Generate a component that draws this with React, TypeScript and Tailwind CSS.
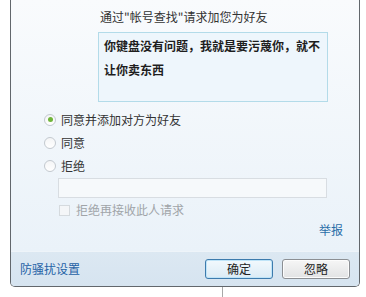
export default function App() {
  const font = { fontFamily: '"Noto Sans CJK SC", "Microsoft YaHei", sans-serif' };
  return (
    <div className="w-[366px] h-[297px] bg-white overflow-hidden text-[12px] text-[#2b2b2b]" style={font}>
      <div className="ml-[10px] w-[350px] h-[287px] border-x border-b border-[#62676c] rounded-b-[5px] overflow-hidden flex flex-col shadow-[inset_0_0_0_1px_#e9eef3]">
        <div className="h-[251px] bg-gradient-to-b from-[#f9fbfd] to-[#eaf2f9] flex flex-col">
          <div className="pt-[9px] pl-[89px] leading-[16px] text-[#333]">通过"帐号查找"请求加您为好友</div>
          <div className="mt-[7px] ml-[87px] w-[230px] h-[70px] border border-[#b3dbe9] bg-[#eef6fc] px-[5px] pt-[1px] font-bold leading-[24px] text-[#1e1e1e]">
            你键盘没有问题，我就是要污蔑你，就不让你卖东西
          </div>
          <div className="mt-[6px] flex flex-col">
            {[
              { label: "同意并添加对方为好友", on: true },
              { label: "同意", on: false },
              { label: "拒绝", on: false },
            ].map((r) => (
              <div key={r.label} className="h-[23px] flex items-center pl-[33px] gap-[5px]">
                <span className="w-[12px] h-[12px] rounded-full border border-[#c3c9cf] bg-gradient-to-b from-[#f4f5f6] to-white flex items-center justify-center">
                  {r.on && <span className="w-[5px] h-[5px] rounded-full bg-[#6fb53a]" />}
                </span>
                <span className="leading-[16px] text-[#333]">{r.label}</span>
              </div>
            ))}
          </div>
          <div className="mt-[1px] ml-[47px] w-[269px] h-[20px] border border-[#d8dde2] bg-[#f6f9fb]" />
          <div className="h-[24px] flex items-center pl-[48px] gap-[6px]">
            <span className="w-[11px] h-[11px] border border-[#d5dade] bg-[#f4f6f8]" />
            <span className="text-[#a0a4a8] leading-[16px]">拒绝再接收此人请求</span>
          </div>
          <div className="flex justify-end pr-[16px] leading-[16px] text-[#2a6ea8]">举报</div>
        </div>
        <div className="flex-1 border-t border-[#eef4f9] bg-gradient-to-b from-[#dce8f2] to-[#d6e4f0] flex items-center pl-[9px] pr-[9px]">
          <span className="text-[#1f62a6] leading-[16px]">防骚扰设置</span>
          <div className="ml-auto flex gap-[9px]">
            <button className="w-[68px] h-[20px] rounded-[3px] border border-[#3d7bad] bg-gradient-to-b from-[#f2f9fd] to-[#dbebf5] shadow-[inset_0_0_0_1px_#bfe4f8] text-[12px] leading-[16px] text-[#222]">确定</button>
            <button className="w-[68px] h-[20px] rounded-[3px] border border-[#8c8f93] bg-gradient-to-b from-[#f6f6f6] to-[#e2e3e4] shadow-[inset_0_0_0_1px_#fcfcfc] text-[12px] leading-[16px] text-[#222]">忽略</button>
          </div>
        </div>
      </div>
      <div className="ml-[222px] w-px h-[10px] bg-[#a8a8a8]" />
    </div>
  );
}
